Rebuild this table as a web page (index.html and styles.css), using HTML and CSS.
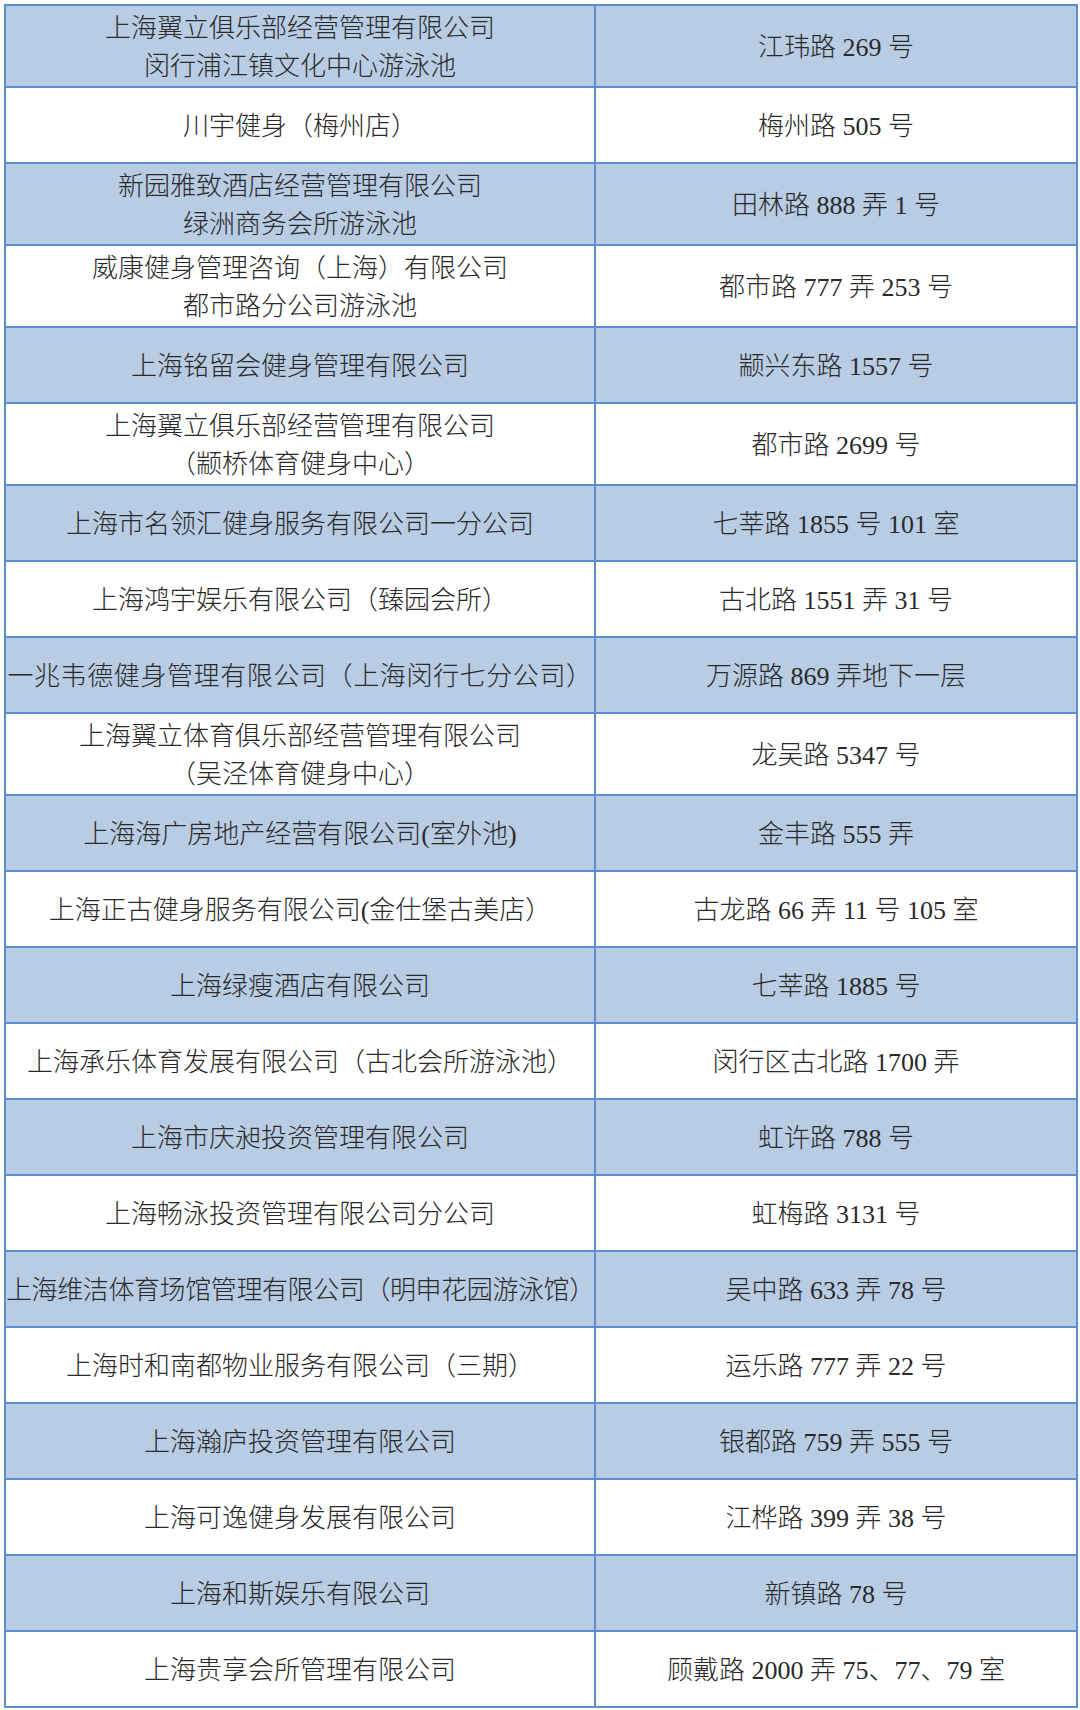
FILE: index.html
```html
<!DOCTYPE html>
<html lang="zh-CN">
<head>
<meta charset="utf-8">
<title>游泳场所名单</title>
<link rel="stylesheet" href="styles.css">
</head>
<body>
<div class="page">
<table class="list">
<colgroup><col class="c-name"><col class="c-addr"></colgroup>
<tbody>
<tr class="two"><td>上海翼立俱乐部经营管理有限公司<br>闵行浦江镇文化中心游泳池</td><td>江玮路 269 号</td></tr>
<tr><td>川宇健身（梅州店）</td><td>梅州路 505 号</td></tr>
<tr class="two"><td>新园雅致酒店经营管理有限公司<br>绿洲商务会所游泳池</td><td>田林路 888 弄 1 号</td></tr>
<tr class="two"><td>威康健身管理咨询（上海）有限公司<br>都市路分公司游泳池</td><td>都市路 777 弄 253 号</td></tr>
<tr><td>上海铭留会健身管理有限公司</td><td>颛兴东路 1557 号</td></tr>
<tr class="two"><td>上海翼立俱乐部经营管理有限公司<br>（颛桥体育健身中心）</td><td>都市路 2699 号</td></tr>
<tr><td>上海市名领汇健身服务有限公司一分公司</td><td>七莘路 1855 号 101 室</td></tr>
<tr><td>上海鸿宇娱乐有限公司（臻园会所）</td><td>古北路 1551 弄 31 号</td></tr>
<tr><td class="wide">一兆韦德健身管理有限公司（上海闵行七分公司）</td><td>万源路 869 弄地下一层</td></tr>
<tr class="two"><td>上海翼立体育俱乐部经营管理有限公司<br>（吴泾体育健身中心）</td><td>龙吴路 5347 号</td></tr>
<tr><td>上海海广房地产经营有限公司(室外池)</td><td>金丰路 555 弄</td></tr>
<tr><td>上海正古健身服务有限公司(金仕堡古美店）</td><td>古龙路 66 弄 11 号 105 室</td></tr>
<tr><td>上海绿瘦酒店有限公司</td><td>七莘路 1885 号</td></tr>
<tr><td>上海承乐体育发展有限公司（古北会所游泳池）</td><td>闵行区古北路 1700 弄</td></tr>
<tr><td>上海市庆昶投资管理有限公司</td><td>虹许路 788 号</td></tr>
<tr><td>上海畅泳投资管理有限公司分公司</td><td>虹梅路 3131 号</td></tr>
<tr><td class="tight">上海维洁体育场馆管理有限公司（明申花园游泳馆）</td><td>吴中路 633 弄 78 号</td></tr>
<tr><td>上海时和南都物业服务有限公司（三期）</td><td>运乐路 777 弄 22 号</td></tr>
<tr><td>上海瀚庐投资管理有限公司</td><td>银都路 759 弄 555 号</td></tr>
<tr><td>上海可逸健身发展有限公司</td><td>江桦路 399 弄 38 号</td></tr>
<tr><td>上海和斯娱乐有限公司</td><td>新镇路 78 号</td></tr>
<tr><td>上海贵享会所管理有限公司</td><td>顾戴路 2000 弄 75、77、79 室</td></tr>
</tbody>
</table>
</div>
</body>
</html>
```

FILE: styles.css
```css
html, body {
  margin: 0;
  padding: 0;
  background: #ffffff;
}

.page {
  padding: 4px 4px 0 4px;
}

.list {
  width: 1072px;
  border-collapse: collapse;
  table-layout: fixed;
  font-family: "Liberation Serif", "Noto Sans CJK SC", serif;
  font-size: 26px;
  font-weight: 300;
  color: #2a2a2a;
}

.c-name { width: 590px; }
.c-addr { width: 482px; }

.list td {
  border: 2px solid #5f8bcf;
  text-align: center;
  vertical-align: middle;
  padding: 4px 0 0 0;
  height: 70px;
  line-height: 38px;
  white-space: nowrap;
  overflow: hidden;
}

.list tr.two td {
  height: 76px;
}

.list tr:nth-child(odd) td {
  background: #b8cce4;
}

.list tr:nth-child(even) td {
  background: #ffffff;
}

.list td.wide {
  letter-spacing: 0.6px;
}

.list td.tight {
  letter-spacing: -0.4px;
}
```
